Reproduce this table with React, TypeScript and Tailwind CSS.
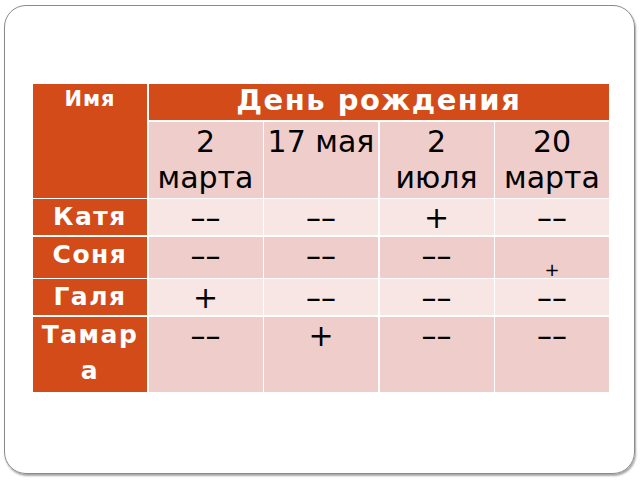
import React from "react";

const dark = "bg-[#efcdca]";
const light = "bg-[#f8e6e5]";

const dates = [["2", "марта"], ["17 мая"], ["2", "июля"], ["20", "марта"]];

const rows = [
  { name: ["Катя"], vals: ["––", "––", "+", "––"], bg: light },
  { name: ["Соня"], vals: ["––", "––", "––", "+small"], bg: dark },
  { name: ["Галя"], vals: ["+", "––", "––", "––"], bg: light },
  { name: ["Тамар", "а"], vals: ["––", "+", "––", "––"], bg: dark },
];

function Val({ v }: { v: string }) {
  if (v === "+small") {
    return <span className="text-[18px] leading-none mt-[24px] block">+</span>;
  }
  return <span className="text-[30px] leading-[36px] mt-[1px]">{v}</span>;
}

export default function App() {
  return (
    <div className="w-[640px] h-[480px] bg-white overflow-hidden" style={{ fontFamily: '"DejaVu Sans", sans-serif' }}>
      <div className="ml-[4px] mt-[5px] w-[631px] h-[469px] rounded-[22px] border-[1.5px] border-[#8a8a8a] shadow-[1px_2px_2px_rgba(0,0,0,0.35)] pl-[28px] pt-[78px]">
        <div className="grid grid-cols-[114px_114px_114px_114px_114px] grid-rows-[36px_76px_36px_41px_36px_75px] gap-[1.5px] bg-white w-fit">
          <div className="row-span-2 bg-[#d24b18] text-white font-bold text-[21px] leading-[26px] text-center tracking-[1px] pt-[2px]">
            Имя
          </div>
          <div className="col-span-4 bg-[#d24b18] text-white font-bold text-[29px] leading-[32px] text-center tracking-[1.5px]">
            День рождения
          </div>
          {dates.map((d) => (
            <div key={d.join(" ")} className={`${dark} text-[30px] leading-[36px] text-center pt-[2px] text-black`}>
              {d.map((line) => (
                <div key={line}>{line}</div>
              ))}
            </div>
          ))}
          {rows.map((r) => (
            <React.Fragment key={r.name.join("")}>
              <div className="bg-[#d24b18] text-white font-bold text-[25px] leading-[36px] text-center tracking-[1.5px]">
                {r.name.map((n) => (
                  <div key={n}>{n}</div>
                ))}
              </div>
              {r.vals.map((v, i) => (
                <div key={i} className={`${r.bg} text-center text-black flex justify-center items-start`}>
                  <Val v={v} />
                </div>
              ))}
            </React.Fragment>
          ))}
        </div>
      </div>
    </div>
  );
}
